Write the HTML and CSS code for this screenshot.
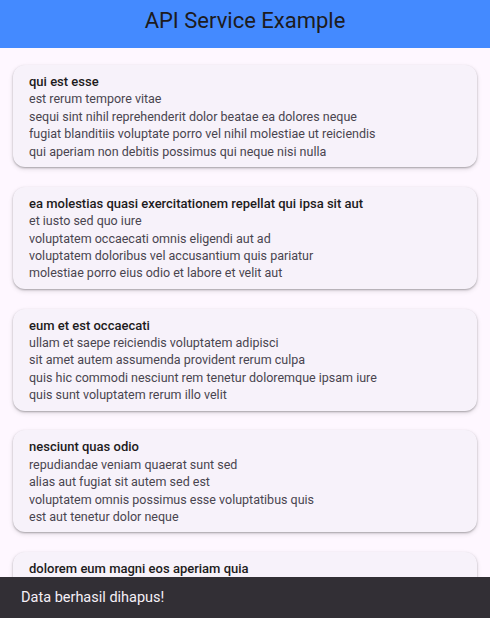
FILE: index.html
```html
<!DOCTYPE html>
<html>
<head>
<meta charset="utf-8">
<link rel="stylesheet" href="styles.css">
</head>
<body>
<header class="appbar"><h1 class="appbar-title">API Service Example</h1></header>
<main class="list">
  <div class="card">
    <div class="card-title">qui est esse</div>
    <div class="card-body">est rerum tempore vitae<br>sequi sint nihil reprehenderit dolor beatae ea dolores neque<br>fugiat blanditiis voluptate porro vel nihil molestiae ut reiciendis<br>qui aperiam non debitis possimus qui neque nisi nulla</div>
  </div>
  <div class="card">
    <div class="card-title">ea molestias quasi exercitationem repellat qui ipsa sit aut</div>
    <div class="card-body">et iusto sed quo iure<br>voluptatem occaecati omnis eligendi aut ad<br>voluptatem doloribus vel accusantium quis pariatur<br>molestiae porro eius odio et labore et velit aut</div>
  </div>
  <div class="card">
    <div class="card-title">eum et est occaecati</div>
    <div class="card-body">ullam et saepe reiciendis voluptatem adipisci<br>sit amet autem assumenda provident rerum culpa<br>quis hic commodi nesciunt rem tenetur doloremque ipsam iure<br>quis sunt voluptatem rerum illo velit</div>
  </div>
  <div class="card">
    <div class="card-title">nesciunt quas odio</div>
    <div class="card-body">repudiandae veniam quaerat sunt sed<br>alias aut fugiat sit autem sed est<br>voluptatem omnis possimus esse voluptatibus quis<br>est aut tenetur dolor neque</div>
  </div>
  <div class="card">
    <div class="card-title">dolorem eum magni eos aperiam quia</div>
    <div class="card-body">ut aspernatur corporis harum nihil quis provident sequi<br>mollitia nobis aliquid molestiae<br>perspiciatis et ea nemo ab reprehenderit accusantium quas<br>voluptate dolores velit et doloremque molestiae</div>
  </div>
</main>
<div class="snackbar">Data berhasil dihapus!</div>
</body>
</html>
```
FILE: styles.css
```css
html, body {
  margin: 0;
  padding: 0;
  height: 100%;
  overflow: hidden;
}
body {
  background: #fef7ff;
  font-family: Roboto, "Noto Sans", sans-serif;
  position: relative;
}
.appbar {
  height: 48px;
  background: #448aff;
  display: flex;
  align-items: center;
  justify-content: center;
}
.appbar-title {
  margin: 0;
  font-size: 22px;
  font-weight: 400;
  color: #1d1b20;
  line-height: 28px;
  margin-top: -7px;
}
.list {
  padding: 17px 13px 0;
  display: flex;
  flex-direction: column;
  gap: 19.75px;
}
.card {
  background: #f7f2fa;
  border-radius: 12px;
  padding: 8px 16px 7px;
  box-shadow: 0 1px 2px rgba(0,0,0,0.28), 0 2px 5px rgba(0,0,0,0.12);
  line-height: 17.4px;
}
.card-title {
  font-size: 13px;
  font-weight: 500;
  color: #1d1b20;
}
.card-body {
  font-size: 12.5px;
  color: #49454f;
}
.snackbar {
  position: absolute;
  left: 0;
  right: 0;
  bottom: 0;
  height: 41px;
  background: #322f35;
  color: #f5eff7;
  font-size: 14.5px;
  display: flex;
  align-items: center;
  padding-left: 21px;
}
```
